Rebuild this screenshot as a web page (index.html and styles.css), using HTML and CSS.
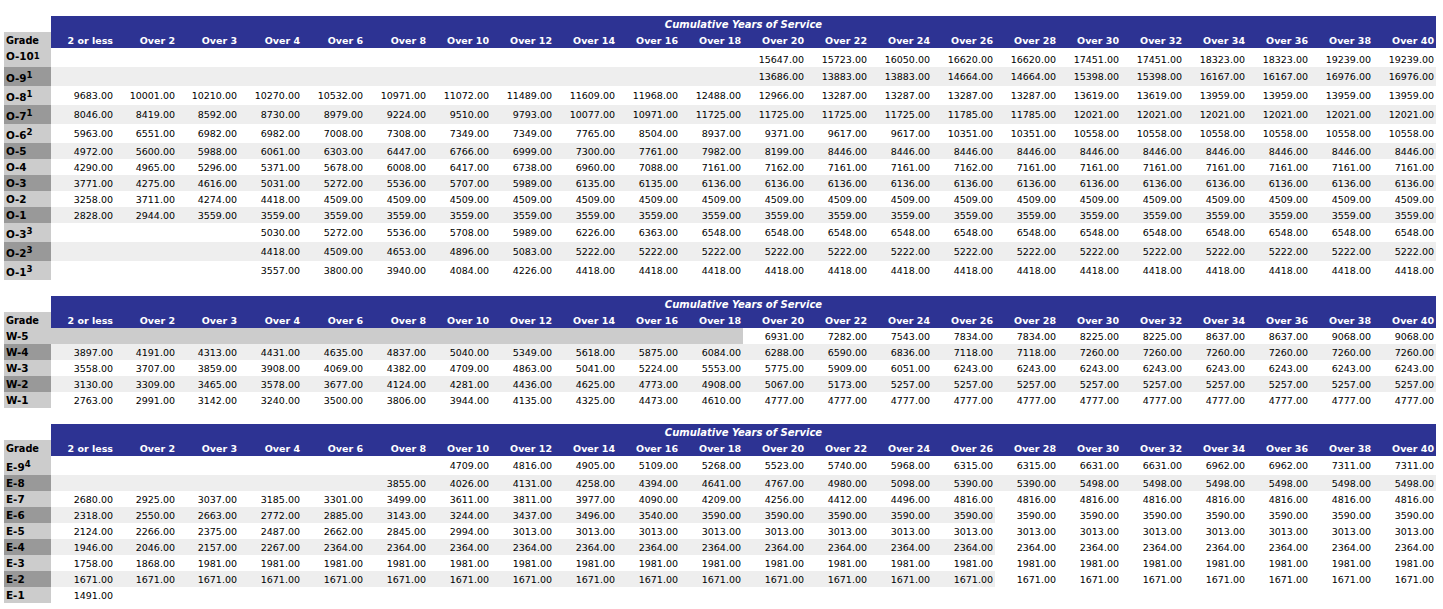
FILE: index.html
```html
<!DOCTYPE html>
<html lang="en">
<head>
<meta charset="utf-8">
<title>Military Pay Tables</title>
<link rel="stylesheet" href="styles.css">
</head>
<body>
<table class="pay">
<colgroup><col class="c-grade"><col class="c-first"><col class="c-narrow"><col class="c-narrow"><col span="18" class="c-std"></colgroup>
<thead>
<tr class="r-head"><td class="blank"></td><th colspan="22" class="title">Cumulative Years of Service</th></tr>
<tr class="r-head"><th class="g grade-head">Grade</th><th>2 or less</th><th>Over 2</th><th>Over 3</th><th>Over 4</th><th>Over 6</th><th>Over 8</th><th>Over 10</th><th>Over 12</th><th>Over 14</th><th>Over 16</th><th>Over 18</th><th>Over 20</th><th>Over 22</th><th>Over 24</th><th>Over 26</th><th>Over 28</th><th>Over 30</th><th>Over 32</th><th>Over 34</th><th>Over 36</th><th>Over 38</th><th>Over 40</th></tr>
</thead>
<tbody>
<tr class="tall o10"><th class="g">O-10<sup class="s-small">1</sup></th><td colspan="11"></td><td>15647.00</td><td>15723.00</td><td>16050.00</td><td>16620.00</td><td>16620.00</td><td>17451.00</td><td>17451.00</td><td>18323.00</td><td>18323.00</td><td>19239.00</td><td>19239.00</td></tr>
<tr class="tall alt"><th class="g">O-9<sup>1</sup></th><td colspan="11"></td><td>13686.00</td><td>13883.00</td><td>13883.00</td><td>14664.00</td><td>14664.00</td><td>15398.00</td><td>15398.00</td><td>16167.00</td><td>16167.00</td><td>16976.00</td><td>16976.00</td></tr>
<tr class="tall"><th class="g">O-8<sup>1</sup></th><td>9683.00</td><td>10001.00</td><td>10210.00</td><td>10270.00</td><td>10532.00</td><td>10971.00</td><td>11072.00</td><td>11489.00</td><td>11609.00</td><td>11968.00</td><td>12488.00</td><td>12966.00</td><td>13287.00</td><td>13287.00</td><td>13287.00</td><td>13287.00</td><td>13619.00</td><td>13619.00</td><td>13959.00</td><td>13959.00</td><td>13959.00</td><td>13959.00</td></tr>
<tr class="tall alt"><th class="g">O-7<sup>1</sup></th><td>8046.00</td><td>8419.00</td><td>8592.00</td><td>8730.00</td><td>8979.00</td><td>9224.00</td><td>9510.00</td><td>9793.00</td><td>10077.00</td><td>10971.00</td><td>11725.00</td><td>11725.00</td><td>11725.00</td><td>11725.00</td><td>11785.00</td><td>11785.00</td><td>12021.00</td><td>12021.00</td><td>12021.00</td><td>12021.00</td><td>12021.00</td><td>12021.00</td></tr>
<tr class="tall"><th class="g">O-6<sup>2</sup></th><td>5963.00</td><td>6551.00</td><td>6982.00</td><td>6982.00</td><td>7008.00</td><td>7308.00</td><td>7349.00</td><td>7349.00</td><td>7765.00</td><td>8504.00</td><td>8937.00</td><td>9371.00</td><td>9617.00</td><td>9617.00</td><td>10351.00</td><td>10351.00</td><td>10558.00</td><td>10558.00</td><td>10558.00</td><td>10558.00</td><td>10558.00</td><td>10558.00</td></tr>
<tr class="alt"><th class="g">O-5</th><td>4972.00</td><td>5600.00</td><td>5988.00</td><td>6061.00</td><td>6303.00</td><td>6447.00</td><td>6766.00</td><td>6999.00</td><td>7300.00</td><td>7761.00</td><td>7982.00</td><td>8199.00</td><td>8446.00</td><td>8446.00</td><td>8446.00</td><td>8446.00</td><td>8446.00</td><td>8446.00</td><td>8446.00</td><td>8446.00</td><td>8446.00</td><td>8446.00</td></tr>
<tr><th class="g">O-4</th><td>4290.00</td><td>4965.00</td><td>5296.00</td><td>5371.00</td><td>5678.00</td><td>6008.00</td><td>6417.00</td><td>6738.00</td><td>6960.00</td><td>7088.00</td><td>7161.00</td><td>7162.00</td><td>7161.00</td><td>7161.00</td><td>7162.00</td><td>7161.00</td><td>7161.00</td><td>7161.00</td><td>7161.00</td><td>7161.00</td><td>7161.00</td><td>7161.00</td></tr>
<tr class="alt"><th class="g">O-3</th><td>3771.00</td><td>4275.00</td><td>4616.00</td><td>5031.00</td><td>5272.00</td><td>5536.00</td><td>5707.00</td><td>5989.00</td><td>6135.00</td><td>6135.00</td><td>6136.00</td><td>6136.00</td><td>6136.00</td><td>6136.00</td><td>6136.00</td><td>6136.00</td><td>6136.00</td><td>6136.00</td><td>6136.00</td><td>6136.00</td><td>6136.00</td><td>6136.00</td></tr>
<tr><th class="g">O-2</th><td>3258.00</td><td>3711.00</td><td>4274.00</td><td>4418.00</td><td>4509.00</td><td>4509.00</td><td>4509.00</td><td>4509.00</td><td>4509.00</td><td>4509.00</td><td>4509.00</td><td>4509.00</td><td>4509.00</td><td>4509.00</td><td>4509.00</td><td>4509.00</td><td>4509.00</td><td>4509.00</td><td>4509.00</td><td>4509.00</td><td>4509.00</td><td>4509.00</td></tr>
<tr class="alt"><th class="g">O-1</th><td>2828.00</td><td>2944.00</td><td>3559.00</td><td>3559.00</td><td>3559.00</td><td>3559.00</td><td>3559.00</td><td>3559.00</td><td>3559.00</td><td>3559.00</td><td>3559.00</td><td>3559.00</td><td>3559.00</td><td>3559.00</td><td>3559.00</td><td>3559.00</td><td>3559.00</td><td>3559.00</td><td>3559.00</td><td>3559.00</td><td>3559.00</td><td>3559.00</td></tr>
<tr class="tall"><th class="g">O-3<sup>3</sup></th><td colspan="3"></td><td>5030.00</td><td>5272.00</td><td>5536.00</td><td>5708.00</td><td>5989.00</td><td>6226.00</td><td>6363.00</td><td>6548.00</td><td>6548.00</td><td>6548.00</td><td>6548.00</td><td>6548.00</td><td>6548.00</td><td>6548.00</td><td>6548.00</td><td>6548.00</td><td>6548.00</td><td>6548.00</td><td>6548.00</td></tr>
<tr class="tall alt"><th class="g">O-2<sup>3</sup></th><td colspan="3"></td><td>4418.00</td><td>4509.00</td><td>4653.00</td><td>4896.00</td><td>5083.00</td><td>5222.00</td><td>5222.00</td><td>5222.00</td><td>5222.00</td><td>5222.00</td><td>5222.00</td><td>5222.00</td><td>5222.00</td><td>5222.00</td><td>5222.00</td><td>5222.00</td><td>5222.00</td><td>5222.00</td><td>5222.00</td></tr>
<tr class="tall"><th class="g">O-1<sup>3</sup></th><td colspan="3"></td><td>3557.00</td><td>3800.00</td><td>3940.00</td><td>4084.00</td><td>4226.00</td><td>4418.00</td><td>4418.00</td><td>4418.00</td><td>4418.00</td><td>4418.00</td><td>4418.00</td><td>4418.00</td><td>4418.00</td><td>4418.00</td><td>4418.00</td><td>4418.00</td><td>4418.00</td><td>4418.00</td><td>4418.00</td></tr>
</tbody>
</table>
<table class="pay">
<colgroup><col class="c-grade"><col class="c-first"><col class="c-narrow"><col class="c-narrow"><col span="18" class="c-std"></colgroup>
<thead>
<tr class="r-head"><td class="blank"></td><th colspan="22" class="title">Cumulative Years of Service</th></tr>
<tr class="r-head"><th class="g grade-head">Grade</th><th>2 or less</th><th>Over 2</th><th>Over 3</th><th>Over 4</th><th>Over 6</th><th>Over 8</th><th>Over 10</th><th>Over 12</th><th>Over 14</th><th>Over 16</th><th>Over 18</th><th>Over 20</th><th>Over 22</th><th>Over 24</th><th>Over 26</th><th>Over 28</th><th>Over 30</th><th>Over 32</th><th>Over 34</th><th>Over 36</th><th>Over 38</th><th>Over 40</th></tr>
</thead>
<tbody>
<tr><th class="g">W-5</th><td colspan="11" class="na"></td><td>6931.00</td><td>7282.00</td><td>7543.00</td><td>7834.00</td><td>7834.00</td><td>8225.00</td><td>8225.00</td><td>8637.00</td><td>8637.00</td><td>9068.00</td><td>9068.00</td></tr>
<tr class="alt"><th class="g">W-4</th><td>3897.00</td><td>4191.00</td><td>4313.00</td><td>4431.00</td><td>4635.00</td><td>4837.00</td><td>5040.00</td><td>5349.00</td><td>5618.00</td><td>5875.00</td><td>6084.00</td><td>6288.00</td><td>6590.00</td><td>6836.00</td><td>7118.00</td><td>7118.00</td><td>7260.00</td><td>7260.00</td><td>7260.00</td><td>7260.00</td><td>7260.00</td><td>7260.00</td></tr>
<tr><th class="g">W-3</th><td>3558.00</td><td>3707.00</td><td>3859.00</td><td>3908.00</td><td>4069.00</td><td>4382.00</td><td>4709.00</td><td>4863.00</td><td>5041.00</td><td>5224.00</td><td>5553.00</td><td>5775.00</td><td>5909.00</td><td>6051.00</td><td>6243.00</td><td>6243.00</td><td>6243.00</td><td>6243.00</td><td>6243.00</td><td>6243.00</td><td>6243.00</td><td>6243.00</td></tr>
<tr class="alt"><th class="g">W-2</th><td>3130.00</td><td>3309.00</td><td>3465.00</td><td>3578.00</td><td>3677.00</td><td>4124.00</td><td>4281.00</td><td>4436.00</td><td>4625.00</td><td>4773.00</td><td>4908.00</td><td>5067.00</td><td>5173.00</td><td>5257.00</td><td>5257.00</td><td>5257.00</td><td>5257.00</td><td>5257.00</td><td>5257.00</td><td>5257.00</td><td>5257.00</td><td>5257.00</td></tr>
<tr><th class="g">W-1</th><td>2763.00</td><td>2991.00</td><td>3142.00</td><td>3240.00</td><td>3500.00</td><td>3806.00</td><td>3944.00</td><td>4135.00</td><td>4325.00</td><td>4473.00</td><td>4610.00</td><td>4777.00</td><td>4777.00</td><td>4777.00</td><td>4777.00</td><td>4777.00</td><td>4777.00</td><td>4777.00</td><td>4777.00</td><td>4777.00</td><td>4777.00</td><td>4777.00</td></tr>
</tbody>
</table>
<table class="pay">
<colgroup><col class="c-grade"><col class="c-first"><col class="c-narrow"><col class="c-narrow"><col span="18" class="c-std"></colgroup>
<thead>
<tr class="r-head"><td class="blank"></td><th colspan="22" class="title">Cumulative Years of Service</th></tr>
<tr class="r-head"><th class="g grade-head">Grade</th><th>2 or less</th><th>Over 2</th><th>Over 3</th><th>Over 4</th><th>Over 6</th><th>Over 8</th><th>Over 10</th><th>Over 12</th><th>Over 14</th><th>Over 16</th><th>Over 18</th><th>Over 20</th><th>Over 22</th><th>Over 24</th><th>Over 26</th><th>Over 28</th><th>Over 30</th><th>Over 32</th><th>Over 34</th><th>Over 36</th><th>Over 38</th><th>Over 40</th></tr>
</thead>
<tbody>
<tr class="tall"><th class="g">E-9<sup>4</sup></th><td colspan="6"></td><td>4709.00</td><td>4816.00</td><td>4905.00</td><td>5109.00</td><td>5268.00</td><td>5523.00</td><td>5740.00</td><td>5968.00</td><td>6315.00</td><td>6315.00</td><td>6631.00</td><td>6631.00</td><td>6962.00</td><td>6962.00</td><td>7311.00</td><td>7311.00</td></tr>
<tr class="alt"><th class="g">E-8</th><td colspan="5"></td><td>3855.00</td><td>4026.00</td><td>4131.00</td><td>4258.00</td><td>4394.00</td><td>4641.00</td><td>4767.00</td><td>4980.00</td><td>5098.00</td><td>5390.00</td><td>5390.00</td><td>5498.00</td><td>5498.00</td><td>5498.00</td><td>5498.00</td><td>5498.00</td><td>5498.00</td></tr>
<tr><th class="g">E-7</th><td>2680.00</td><td>2925.00</td><td>3037.00</td><td>3185.00</td><td>3301.00</td><td>3499.00</td><td>3611.00</td><td>3811.00</td><td>3977.00</td><td>4090.00</td><td>4209.00</td><td>4256.00</td><td>4412.00</td><td>4496.00</td><td>4816.00</td><td>4816.00</td><td>4816.00</td><td>4816.00</td><td>4816.00</td><td>4816.00</td><td>4816.00</td><td>4816.00</td></tr>
<tr class="alt short"><th class="g">E-6</th><td>2318.00</td><td>2550.00</td><td>2663.00</td><td>2772.00</td><td>2885.00</td><td>3143.00</td><td>3244.00</td><td>3437.00</td><td>3496.00</td><td>3540.00</td><td>3590.00</td><td>3590.00</td><td>3590.00</td><td>3590.00</td><td>3590.00</td><td>3590.00</td><td>3590.00</td><td>3590.00</td><td>3590.00</td><td>3590.00</td><td>3590.00</td><td>3590.00</td></tr>
<tr><th class="g">E-5</th><td>2124.00</td><td>2266.00</td><td>2375.00</td><td>2487.00</td><td>2662.00</td><td>2845.00</td><td>2994.00</td><td>3013.00</td><td>3013.00</td><td>3013.00</td><td>3013.00</td><td>3013.00</td><td>3013.00</td><td>3013.00</td><td>3013.00</td><td>3013.00</td><td>3013.00</td><td>3013.00</td><td>3013.00</td><td>3013.00</td><td>3013.00</td><td>3013.00</td></tr>
<tr class="alt short"><th class="g">E-4</th><td>1946.00</td><td>2046.00</td><td>2157.00</td><td>2267.00</td><td>2364.00</td><td>2364.00</td><td>2364.00</td><td>2364.00</td><td>2364.00</td><td>2364.00</td><td>2364.00</td><td>2364.00</td><td>2364.00</td><td>2364.00</td><td>2364.00</td><td>2364.00</td><td>2364.00</td><td>2364.00</td><td>2364.00</td><td>2364.00</td><td>2364.00</td><td>2364.00</td></tr>
<tr><th class="g">E-3</th><td>1758.00</td><td>1868.00</td><td>1981.00</td><td>1981.00</td><td>1981.00</td><td>1981.00</td><td>1981.00</td><td>1981.00</td><td>1981.00</td><td>1981.00</td><td>1981.00</td><td>1981.00</td><td>1981.00</td><td>1981.00</td><td>1981.00</td><td>1981.00</td><td>1981.00</td><td>1981.00</td><td>1981.00</td><td>1981.00</td><td>1981.00</td><td>1981.00</td></tr>
<tr class="alt short"><th class="g">E-2</th><td>1671.00</td><td>1671.00</td><td>1671.00</td><td>1671.00</td><td>1671.00</td><td>1671.00</td><td>1671.00</td><td>1671.00</td><td>1671.00</td><td>1671.00</td><td>1671.00</td><td>1671.00</td><td>1671.00</td><td>1671.00</td><td>1671.00</td><td>1671.00</td><td>1671.00</td><td>1671.00</td><td>1671.00</td><td>1671.00</td><td>1671.00</td><td>1671.00</td></tr>
<tr><th class="g">E-1</th><td>1491.00</td><td colspan="21"></td></tr>
</tbody>
</table>
</body>
</html>
```
FILE: styles.css
```css
html, body {
  margin: 0;
  padding: 0;
  background: #fff;
}
body {
  padding: 16px 0 0 4px;
  font-family: "DejaVu Sans", Verdana, sans-serif;
  font-size: 9.5px;
  color: #000;
}
.pay {
  width: 1432px;
  table-layout: fixed;
  border-collapse: collapse;
  border-spacing: 0;
  margin-bottom: 16px;
}
.c-grade { width: 47px; }
.c-first { width: 64px; }
.c-narrow { width: 62px; }
.c-std { width: 63px; }
.pay tr { height: 16px; }
.pay tr.tall { height: 19px; }
.pay td, .pay th {
  padding: 2px 2px 0 0;
  text-align: right;
  line-height: 12px;
  white-space: nowrap;
}
.pay tr.tall td { padding-top: 1px; }
.pay thead th {
  background: #2d3393;
  color: #fff;
  font-weight: bold;
}
.pay thead td.blank { background: #fff; }
.pay thead th.title {
  text-align: center;
  font-style: italic;
  font-size: 10px;
  padding-right: 0;
}
.pay th.g {
  background: #ccc;
  color: #000;
  text-align: left;
  padding: 0 0 0 2px;
  font-size: 10.4px;
  font-weight: bold;
}
.pay thead th.grade-head {
  background: #ccc;
  color: #000;
  padding: 2px 0 0 2px;
  font-size: 9.75px;
}
.pay tr.alt td { background: #eee; }
.pay tr.alt th.g { background: #999; }
.pay tr.short td:nth-child(n+17) { background: #fff; }
.pay td.na { background: #ccc; }
.pay tr.o10 td { padding-top: 5px; }
.pay tr.tall th.g { padding-top: 3px; }
.pay tr.o10 th.g { padding: 0 0 3px 2px; }
sup {
  font-size: 8.6px;
  line-height: 0;
  vertical-align: 4px;
}
sup.s-small {
  font-size: 8.5px;
  vertical-align: 1px;
}
```
